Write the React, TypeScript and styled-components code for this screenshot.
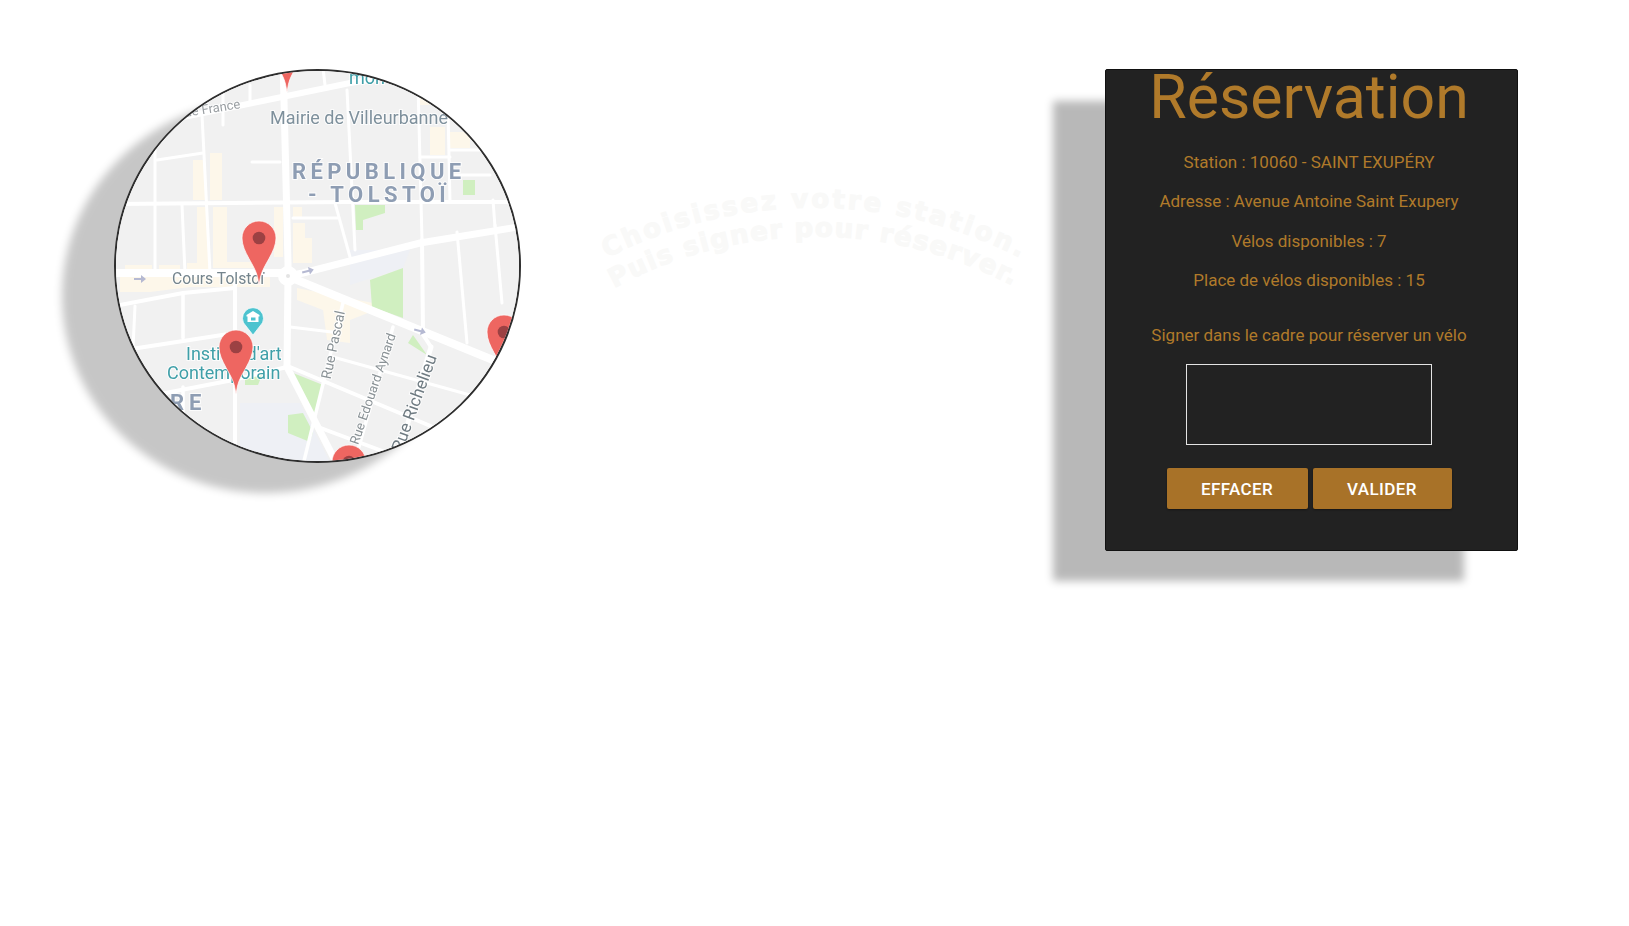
import React from 'react';
import styled, { createGlobalStyle } from 'styled-components';

const GlobalStyle = createGlobalStyle`
  html, body {
    margin: 0;
    padding: 0;
    background: #ffffff;
  }
`;

// [path, stroke width] in page coordinates, the map svg has a matching viewBox
const ROADS: [string, number][] = [
  ['M283 60 L288 263 L288 277 L287 367', 7],
  ['M150 125 L183 117 L243 105 L350 83 L400 75', 6],
  ['M115 204 L350 202 L520 202', 4],
  ['M288 276 L303 273 L420 243 L530 225', 7],
  ['M288 276 L297 280 L493 360', 8],
  ['M110 273 L288 273', 8],
  ['M115 306 L183 293 L235 288', 4],
  ['M125 350 L235 333', 4],
  ['M235 280 L235 447', 4],
  ['M150 396 L233 380 L287 367', 4],
  ['M183 293 L183 338', 3.5],
  ['M183 387 L183 415', 3.5],
  ['M135 306 L133 348', 3],
  ['M287 367 L340 470', 7],
  ['M343 303 L303 465', 3.5],
  ['M393 327 L358 450', 3.5],
  ['M420 330 L431 347', 4],
  ['M431 347 L396 462', 5],
  ['M290 327 L340 333', 3],
  ['M333 357 L470 395', 3],
  ['M290 367 L440 430', 4],
  ['M318 427 L385 452', 4],
  ['M422 240 L423 332', 4],
  ['M457 232 L467 343', 3],
  ['M495 225 L502 303', 3],
  ['M347 90 L355 250', 3],
  ['M418 85 L422 240', 3],
  ['M448 110 L450 202', 3],
  ['M493 200 L495 227', 3],
  ['M420 157 L450 157', 3],
  ['M450 150 L483 150', 3],
  ['M450 175 L490 175', 3],
  ['M202 115 L210 273', 3],
  ['M155 150 L155 273', 3],
  ['M157 160 L203 153', 3],
  ['M182 205 L185 273', 3],
  ['M250 85 L250 103', 3],
  ['M223 93 L223 125', 3],
  ['M252 162 L280 162', 3],
  ['M323 68 L325 85', 3],
  ['M293 218 L338 218', 3],
  ['M335 203 L350 257', 3],
];

const BEIGE = [
  'M193 160 H205 V200 H193 Z',
  'M210 153 H222 V200 H210 Z',
  'M197 207 H208 V263 H197 Z',
  'M213 207 H227 V262 H256 V268 H213 Z',
  'M125 265 H152 V269 H125 Z',
  'M159 265 H180 V269 H159 Z',
  'M187 263 H210 V269 H187 Z',
  'M274 207 H283 V257 H274 Z',
  'M293 207 H302 V217 H293 Z',
  'M293 223 H305 V238 H312 V263 H293 Z',
  'M120 277 H270 V287 H190 L150 292 H120 Z',
  'M297 288 L373 303 L373 311 L350 320 L350 343 L327 340 L323 310 L297 300 Z',
  'M430 127 H445 V155 H430 Z',
  'M450 132 H470 V148 H450 Z',
  'M418 97 H430 V105 H418 Z',
];

const PARKS = [
  'M355 205 H385 V213 L363 220 V230 H356 Z',
  'M463 180 H475 V195 H463 Z',
  'M370 280 L403 268 V318 L372 307 Z',
  'M408 343 L413 335 L427 355 Z',
  'M293 373 L323 385 L315 418 Z',
  'M288 415 L303 413 L313 432 L310 442 L288 433 Z',
  'M245 375 H262 L258 385 H245 Z',
];

const PINS: [number, number][] = [
  [287, 45],
  [259, 238],
  [236, 347],
  [504, 332],
  [349, 462],
  [105, 318],
];

const ARROWS: [number, number, number][] = [
  [140, 279, 0],
  [308, 271, -15],
  [420, 331, 15],
];

const INFOS = [
  'Station : 10060 - SAINT EXUPÉRY',
  'Adresse : Avenue Antoine Saint Exupery',
  'Vélos disponibles : 7',
  'Place de vélos disponibles : 15',
];

const Pin = ({ x, y }: { x: number; y: number }) => {
  const tip = y + 47;
  return (
    <g>
      <path
        d={`M${x} ${tip} L${x - 1.5} ${tip - 8} C${x - 4} ${tip - 20} ${x - 17} ${y + 14} ${x - 17} ${y} A17 17 0 1 1 ${x + 17} ${y} C${x + 17} ${y + 14} ${x + 4} ${tip - 20} ${x + 1.5} ${tip - 8} Z`}
        fill="#ee6661"
        stroke="#ffffff"
        strokeOpacity="0.7"
      />
      <circle cx={x} cy={y} r="6.3" fill="#9c4143" />
    </g>
  );
};

const MapPicture = () => (
  <MapSvg viewBox="116 71 403 390">
    <rect x="116" y="71" width="403" height="390" fill="#f1f1f1" />
    <path d="M240 403 H300 L330 462 H240 Z" fill="#eef0f5" />
    <path d="M350 250 H410 L403 268 L350 285 Z" fill="#eef0f5" />
    {BEIGE.map(d => (
      <path key={d} d={d} fill="#fdf7ea" />
    ))}
    {PARKS.map(d => (
      <path key={d} d={d} fill="#d0efc0" />
    ))}
    <g fill="none" stroke="#ffffff" strokeLinecap="round">
      {ROADS.map(([d, w]) => (
        <path key={d} d={d} strokeWidth={w} />
      ))}
    </g>
    <circle cx="288" cy="276" r="10" fill="#ffffff" />
    <circle cx="288" cy="276" r="2" fill="#e4e4e4" />

    {ARROWS.map(([x, y, r]) => (
      <path
        key={x}
        d="M-6 -1 H1 V-4 L6 0 L1 4 V1 H-6 Z"
        fill="#b5b9d2"
        transform={`translate(${x} ${y}) rotate(${r})`}
      />
    ))}

    <MapLabel x="349" y="84" $size={18} $color="#3f9fa8">mon</MapLabel>
    <MapLabel x="185" y="117" $size={13} $color="#9a9fa3" transform="rotate(-9 185 117)">de France</MapLabel>
    <MapLabel x="270" y="124" $size={18} $color="#7e909c">Mairie de Villeurbanne</MapLabel>
    <MapLabel x="292" y="179" $size={22} $color="#8e9db3" $weight={700} $spacing={4.4}>RÉPUBLIQUE</MapLabel>
    <MapLabel x="308" y="202" $size={22} $color="#8e9db3" $weight={700} $spacing={4.4}>- TOLSTOÏ</MapLabel>
    <MapLabel x="172" y="284" $size={15.7} $color="#74848c">Cours Tolstoï</MapLabel>
    <MapLabel x="186" y="360" $size={18} $color="#3f9fa8">Institut d'art</MapLabel>
    <MapLabel x="167" y="379" $size={18} $color="#3f9fa8">Contemporain</MapLabel>
    <MapLabel x="170" y="410" $size={22} $color="#8e9db3" $weight={700} $spacing={5}>RE</MapLabel>
    <MapLabel x="345" y="312" $size={14} $color="#8a9296" $anchor="end" transform="rotate(-78 345 312)">Rue Pascal</MapLabel>
    <MapLabel x="396" y="335" $size={13} $color="#8a9296" $anchor="end" transform="rotate(-71 396 335)">Rue Edouard Aynard</MapLabel>
    <MapLabel x="437" y="357" $size={17} $color="#6f7b82" $anchor="end" transform="rotate(-70 437 357)">Rue Richelieu</MapLabel>

    {PINS.map(([x, y]) => (
      <Pin key={x} x={x} y={y} />
    ))}

    <path
      d="M253 335 L246 326 A10.5 10.5 0 1 1 260 326 Z"
      fill="#4dc3cf"
      stroke="#ffffff"
      strokeOpacity="0.7"
    />
    <path d="M246.5 315 L253 311 L259.5 315 V316.5 H258.5 V322 H247.5 V316.5 H246.5 Z" fill="#ffffff" />
    <path d="M251 317.5 H255.5 V320.5 H251 Z" fill="#4dc3cf" />
  </MapSvg>
);

const CurvedHint = () => (
  <HintSvg viewBox="595 185 445 110">
    <defs>
      <path id="hint-line-1" d="M607 258 A450 450 0 0 1 1032 264" />
      <path id="hint-line-2" d="M614 288 A420 420 0 0 1 1024 292" />
    </defs>
    <HintText>
      <textPath href="#hint-line-1" textLength="430">Choisissez votre station.</textPath>
    </HintText>
    <HintText>
      <textPath href="#hint-line-2" textLength="416">Puis signer pour réserver.</textPath>
    </HintText>
  </HintSvg>
);

const App = () => (
  <>
    <GlobalStyle />
    <Page>
      <MapCircle>
        <MapPicture />
      </MapCircle>
      <CurvedHint />
      <ReservationPanel>
        <Title>Réservation</Title>
        {INFOS.map(info => (
          <InfoLine key={info}>{info}</InfoLine>
        ))}
        <SignLabel>Signer dans le cadre pour réserver un vélo</SignLabel>
        <SignatureBox />
        <Buttons>
          <ActionButton $width={141}>EFFACER</ActionButton>
          <ActionButton $width={139}>VALIDER</ActionButton>
        </Buttons>
      </ReservationPanel>
    </Page>
  </>
);

export default App;

const Page = styled.main`
  display: flex;
  align-items: flex-start;

  box-sizing: border-box;
  width: 100%;
  min-height: 926px;
  padding: 69px 111px 0 114px;

  font-family: 'Roboto', 'Liberation Sans', sans-serif;
`;

const MapCircle = styled.section`
  flex: none;
  overflow: hidden;

  box-sizing: border-box;
  width: 407px;
  height: 394px;
  border: 2px solid #2e2e2e;
  border-radius: 50%;

  box-shadow: -52px 30px 8px rgba(0, 0, 0, 0.225);
`;

const MapSvg = styled.svg`
  display: block;
  width: 100%;
  height: 100%;

  filter: blur(0.35px);
`;

const MapLabel = styled.text<{
  $size: number;
  $color: string;
  $weight?: number;
  $spacing?: number;
  $anchor?: string;
}>`
  font-family: 'Roboto', sans-serif;
  font-size: ${({ $size }) => $size}px;
  font-weight: ${({ $weight }) => $weight ?? 400};
  letter-spacing: ${({ $spacing }) => $spacing ?? 0}px;
  text-anchor: ${({ $anchor }) => $anchor ?? 'start'};
  fill: ${({ $color }) => $color};
  stroke: #ffffff;
  stroke-width: 2px;
  stroke-opacity: 0.8;
  paint-order: stroke;
`;

const HintSvg = styled.svg`
  flex: none;
  width: 445px;
  height: 110px;
  margin: 116px 0 0 74px;
`;

const HintText = styled.text`
  font-family: 'DejaVu Sans', sans-serif;
  font-size: 26px;
  font-weight: 700;
  letter-spacing: 1px;
  fill: #f9f9f8;
  stroke: #f9f9f8;
  stroke-width: 1.1px;
`;

const ReservationPanel = styled.aside`
  flex: none;
  display: flex;
  flex-direction: column;
  align-items: center;

  box-sizing: border-box;
  width: 413px;
  height: 482px;
  margin-left: auto;
  padding-right: 5px;
  border: 1px solid #111111;
  border-radius: 2px;

  background-color: #222222;
  color: #b07a2a;
  box-shadow: -53px 31px 8px -1px rgba(0, 0, 0, 0.28);
`;

const Title = styled.h1`
  margin: 0 0 26px;

  font-size: 60.8px;
  font-weight: 400;
  line-height: 56px;
`;

const InfoLine = styled.p`
  margin: 0 0 19.3px;

  font-size: 17px;
  line-height: 20px;
`;

const SignLabel = styled.p`
  margin: 16px 0 19px;

  font-size: 17px;
  line-height: 20px;
`;

const SignatureBox = styled.div`
  flex: none;
  box-sizing: border-box;
  width: 246px;
  height: 81px;
  border: 1.5px solid #e4e4e4;
`;

const Buttons = styled.div`
  display: flex;
  gap: 5px;

  margin-top: 23px;
`;

const ActionButton = styled.button<{ $width: number }>`
  width: ${({ $width }) => $width}px;
  height: 41px;
  padding: 0;
  border: none;
  border-radius: 2px;

  background-color: #a87228;
  color: #ffffff;
  box-shadow: 0 1px 2px rgba(0, 0, 0, 0.4);

  font-family: 'Roboto', sans-serif;
  font-size: 17px;
  font-weight: 500;
  letter-spacing: 0.4px;
`;
